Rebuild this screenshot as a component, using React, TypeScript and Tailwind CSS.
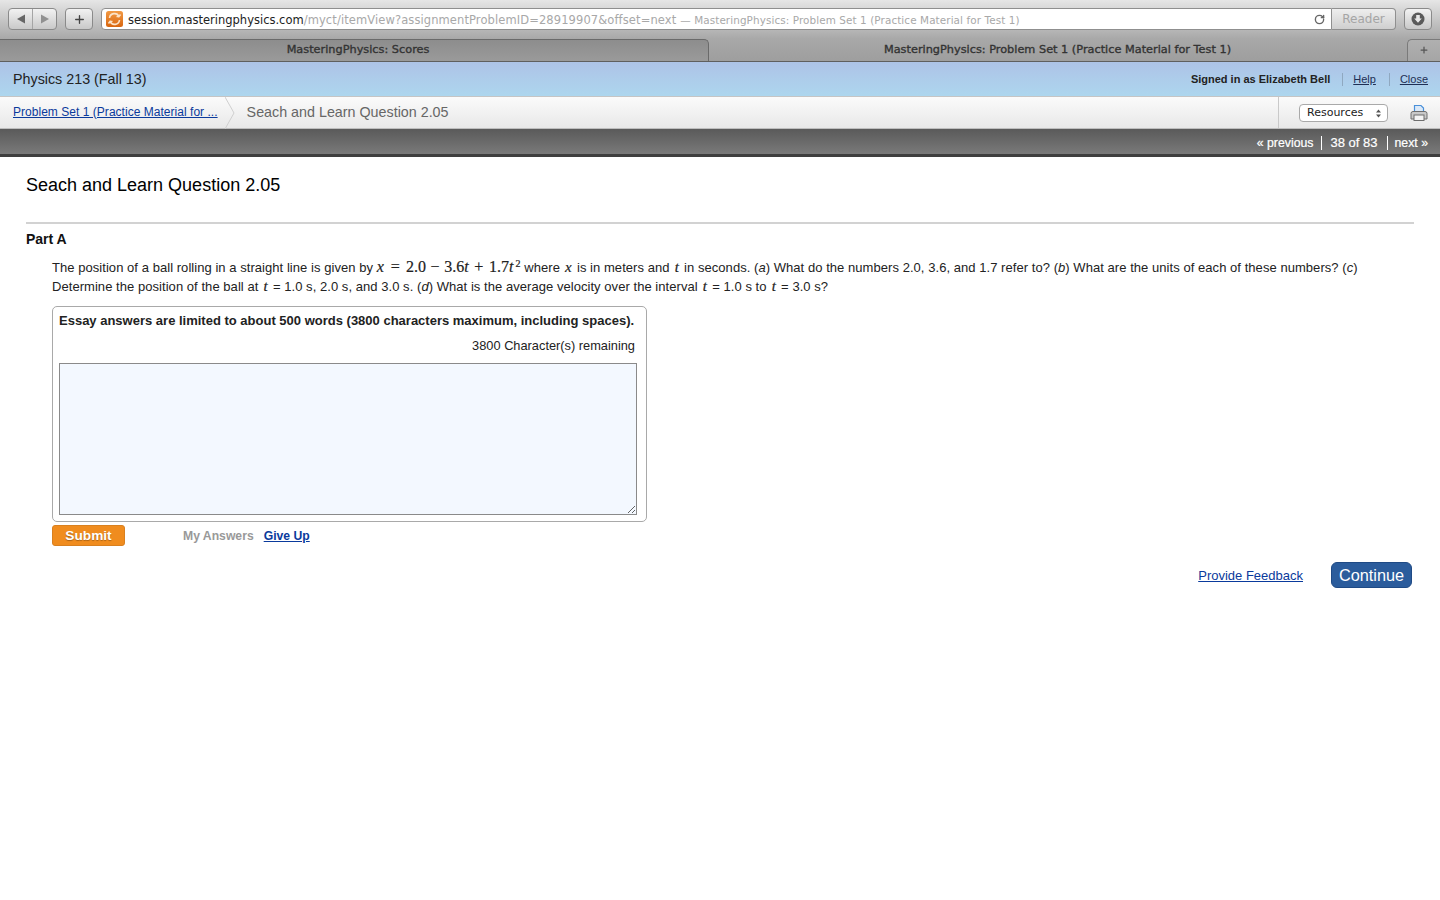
import React from 'react';
import { RotateCw, Plus } from 'lucide-react';

const sans = { fontFamily: '"Liberation Sans", Arial, sans-serif' };

function V({ children }: { children: React.ReactNode }) {
  return <span className="mx-[1.5px] font-['Liberation_Serif',serif] italic text-[15px] [-webkit-text-stroke:0.2px]">{children}</span>;
}

function Equation() {
  return (
    <span className="font-['Liberation_Serif',serif] text-[16px] leading-none [-webkit-text-stroke:0.2px]">
      <i className="mr-[1px]">x</i>
      <span className="mx-[6px]">=</span>
      2.0
      <span className="mx-[4.5px]">−</span>
      3.6<i>t</i>
      <span className="mx-[5.5px]">+</span>
      1.7<i>t</i>
      <span className="relative -top-[5px] ml-[2px] text-[10px] leading-none">2</span>
    </span>
  );
}

function Browser() {
  return (
    <div className="font-['DejaVu_Sans',sans-serif]">
      <div className="h-[39px] flex items-center pl-2 pr-[6px] pb-[1px] bg-gradient-to-b from-[#e6e6e6] to-[#a8a8a8]">
        <div className="w-[49px] h-[22px] flex rounded-[4px] border border-[#8a8a8a] bg-gradient-to-b from-[#f2f2f2] to-[#c9c9c9]">
          <div className="flex-1 flex items-center justify-center border-r border-[#a5a5a5]">
            <svg width="10" height="10" viewBox="0 0 10 10"><path d="M1 5 L9 0.5 V9.5 Z" fill="#666" /></svg>
          </div>
          <div className="flex-1 flex items-center justify-center">
            <svg width="10" height="10" viewBox="0 0 10 10"><path d="M9 5 L1 0.5 V9.5 Z" fill="#919191" /></svg>
          </div>
        </div>
        <div className="ml-2 w-[28px] h-[22px] flex items-center justify-center rounded-[4px] border border-[#8a8a8a] bg-gradient-to-b from-[#f2f2f2] to-[#c9c9c9]">
          <Plus size={13} strokeWidth={2.5} color="#444" />
        </div>
        <div className="ml-2 w-[1231px] h-[22px] flex items-center rounded-l-[4px] border border-[#8f8f8f] bg-white pl-[4px]">
          <svg width="17" height="16" viewBox="0 0 17 16" className="shrink-0">
            <defs>
              <linearGradient id="fav" x1="0" y1="0" x2="0" y2="1">
                <stop offset="0" stopColor="#f29a45" />
                <stop offset="1" stopColor="#d9660f" />
              </linearGradient>
            </defs>
            <rect width="17" height="16" rx="2.5" fill="url(#fav)" />
            <path d="M3.5 7 A5 5 0 0 1 13 5.5 L14.5 3.5 M13 5.5 L10.5 5.5" fill="none" stroke="#fbe3c8" strokeWidth="1.6" />
            <path d="M13.5 9 A5 5 0 0 1 4 10.5 L2.5 12.5 M4 10.5 L6.5 10.5" fill="none" stroke="#fbe3c8" strokeWidth="1.6" />
          </svg>
          <span className="ml-[5px] mt-[3px] text-[11.5px] text-[#222] whitespace-nowrap">session.masteringphysics.com</span>
          <span className="mt-[3px] text-[11.5px] text-[#a8a8a8] whitespace-nowrap tracking-[0.1px]">/myct/itemView?assignmentProblemID=28919907&amp;offset=next</span>
          <span className="ml-[4px] mt-[3px] text-[10.4px] text-[#a8a8a8] whitespace-nowrap tracking-[0.1px]">— MasteringPhysics: Problem Set 1 (Practice Material for Test 1)</span>
          <RotateCw size={11} strokeWidth={3} color="#666" className="ml-auto mr-[6px]" />
        </div>
        <div className="w-[64px] h-[22px] flex items-center justify-center rounded-r-[4px] border border-l-0 border-[#8f8f8f] bg-gradient-to-b from-[#eeeeee] to-[#cfcfcf] text-[12px] text-[#a5a5a5]">
          Reader
        </div>
        <div className="ml-2 w-[28px] h-[22px] flex items-center justify-center rounded-[4px] border border-[#8a8a8a] bg-gradient-to-b from-[#f2f2f2] to-[#c9c9c9]">
          <svg width="14" height="14" viewBox="0 0 14 14">
            <circle cx="7" cy="7" r="6.5" fill="#5a5a5a" />
            <path d="M5.2 3 H8.8 V6.5 H10.8 L7 10.8 L3.2 6.5 H5.2 Z" fill="#e8e8e8" />
          </svg>
        </div>
      </div>
      <div className="h-[23px] flex bg-gradient-to-b from-[#a8a8a8] to-[#9e9e9e] border-b border-[#5f5f5f] text-[11.3px] text-[#333] [-webkit-text-stroke:0.35px]">
        <div className="w-[709px] flex items-center justify-center rounded-tr-[5px] border-t border-r border-[#6a6a6a] bg-gradient-to-b from-[#8d8d8d] to-[#9a9a9a] pl-[8px]">
          MasteringPhysics: Scores
        </div>
        <div className="flex-1 flex items-center justify-center pr-[1px]">
          MasteringPhysics: Problem Set 1 (Practice Material for Test 1)
        </div>
        <div className="w-[33px] flex items-center justify-center rounded-tl-[5px] border-l border-t border-[#7a7a7a] bg-gradient-to-b from-[#b0b0b0] to-[#a5a5a5] pb-[2px]">
          <Plus size={10} strokeWidth={3} color="#555" />
        </div>
      </div>
    </div>
  );
}

export default function App() {
  return (
    <div className="w-[1440px] h-[900px] overflow-hidden bg-white text-black" style={sans}>
      <Browser />

      <div className="h-[35px] flex items-center pl-[13px] pr-[12px] bg-gradient-to-b from-[#adc3e7] to-[#add6ee] border-b border-[#c5c5c5]">
        <span className="mt-[2px] text-[14.3px] text-[#222]">Physics 213 (Fall 13)</span>
        <span className="ml-auto text-[11px] font-bold text-[#222]">Signed in as Elizabeth Bell</span>
        <span className="ml-[12px] h-[13px] border-l border-[#8fa8c0]" />
        <a className="ml-[10px] text-[11px] underline text-[#1e2f55]">Help</a>
        <span className="ml-[13px] h-[13px] border-l border-[#8fa8c0]" />
        <a className="ml-[10px] text-[11px] underline text-[#1e2f55]">Close</a>
      </div>

      <div className="h-[32px] flex items-center bg-gradient-to-b from-[#fbfbfb] to-[#e8e8e8] border-b border-[#bdbdbd]">
        <a className="ml-[13px] mb-[2px] text-[12px] tracking-[0.03px] underline text-[#0a3a9c] whitespace-nowrap">Problem Set 1 (Practice Material for ...</a>
        <svg width="10" height="32" viewBox="0 0 10 32" className="ml-[7px] shrink-0">
          <path d="M0 0 L9 16 L0 32" fill="none" stroke="#cfcfcf" />
        </svg>
        <span className="ml-[12px] text-[14.3px] text-[#666]">Seach and Learn Question 2.05</span>
        <div className="ml-auto h-full w-[162px] flex items-center border-l border-[#c9c9c9] pl-[20px]">
          <div className="w-[89px] h-[18px] flex items-center rounded-[4px] border border-[#a9a9a9] bg-white pl-[7px] pr-[6px] pt-[1px] font-['DejaVu_Sans',sans-serif] text-[11px] text-[#222]">
            Resources
            <svg width="5" height="9" viewBox="0 0 5 9" className="ml-auto">
              <path d="M2.5 0.5 L5 3.5 H0 Z M2.5 8.5 L5 5.5 H0 Z" fill="#555" />
            </svg>
          </div>
          <svg width="18" height="18" viewBox="0 0 18 18" className="ml-[22px]">
            <path d="M4.5 8 V1.5 H11 L13.5 4 V8 Z" fill="#dbe9f8" stroke="#4a90d9" strokeWidth="1.2" />
            <path d="M1 9.5 Q1 7.5 3 7.5 H15 Q17 7.5 17 9.5 V15 H1 Z" fill="#c9c9c9" stroke="#6e6e6e" />
            <rect x="4" y="11" width="10" height="5.5" fill="#f4f4f4" stroke="#6e6e6e" />
          </svg>
        </div>
      </div>

      <div className="h-[28px] flex items-center justify-end pr-[12px] pt-[3px] bg-gradient-to-b from-[#5a5a5a] to-[#7a7a7a] border-b-[3px] border-[#3e3e3e] text-[12.3px] text-white [-webkit-text-stroke:0.2px]">
        <span>« previous</span>
        <span className="ml-[7px] h-[14px] border-l border-white" />
        <span className="ml-[9px] text-[13px]">38 of 83</span>
        <span className="ml-[9px] h-[14px] border-l border-white" />
        <span className="ml-[7px]">next »</span>
      </div>

      <main className="px-[26px]">
        <h1 className="mt-[17px] text-[18px] leading-[22px] text-black">Seach and Learn Question 2.05</h1>
        <div className="mt-[26px] border-t-2 border-[#d2d2d2]" />
        <h2 className="mt-[7px] text-[14px] leading-[16px] font-bold text-[#111]">Part A</h2>

        <div className="ml-[26px] mt-[11px] w-[1320px] text-[13px] tracking-[0.05px] leading-[19px] text-[#222]">
          <p className="h-[19px] whitespace-nowrap">
            The position of a ball rolling in a straight line is given by <Equation /> where <V>x</V> is in meters and <V>t</V> in seconds. (<i>a</i>) What do the numbers 2.0, 3.6, and 1.7 refer to? (<i>b</i>) What are the units of each of these numbers? (<i>c</i>)
          </p>
          <p className="h-[19px] whitespace-nowrap">
            Determine the position of the ball at <V>t</V> = 1.0 s, 2.0 s, and 3.0 s. (<i>d</i>) What is the average velocity over the interval <V>t</V> = 1.0 s to <V>t</V> = 3.0 s?
          </p>
        </div>

        <section className="ml-[26px] mt-[10px] w-[595px] h-[216px] rounded-[5px] border border-[#a9a9a9] pl-[6px] pr-[11px] pt-[6px]">
          <p className="text-[13px] leading-[15px] font-bold text-[#222] whitespace-nowrap">
            Essay answers are limited to about 500 words (3800 characters maximum, including spaces).
          </p>
          <p className="mt-[10px] text-right text-[12.8px] leading-[15px] text-[#222]">3800 Character(s) remaining</p>
          <textarea className="mt-[10px] block w-[578px] h-[152px] border border-[#8a8a8a] bg-[#f3f8ff] outline-none" />
        </section>

        <div className="ml-[26px] mt-[3px] flex items-center">
          <button className="w-[73px] h-[21px] rounded-[3px] border border-[#d9801f] bg-[#f08c1e] text-[13.7px] font-bold text-white [text-shadow:0_1px_1px_rgba(0,0,0,0.3)]">
            Submit
          </button>
          <span className="ml-[58px] mt-[2px] text-[12.2px] font-bold text-[#999]">My Answers</span>
          <a className="ml-[10px] mt-[2px] text-[12.2px] font-bold underline text-[#0a3a9c]">Give Up</a>
        </div>

        <div className="mt-[16px] flex items-center justify-end pr-[2px]">
          <a className="mt-[2px] text-[13px] underline text-[#0a3a9c]">Provide Feedback</a>
          <button className="ml-[28px] w-[81px] h-[26px] rounded-[6px] border border-[#1f4a85] bg-[#2b5c9c] pb-[2px] text-[16.3px] text-white">
            Continue
          </button>
        </div>
      </main>
    </div>
  );
}
